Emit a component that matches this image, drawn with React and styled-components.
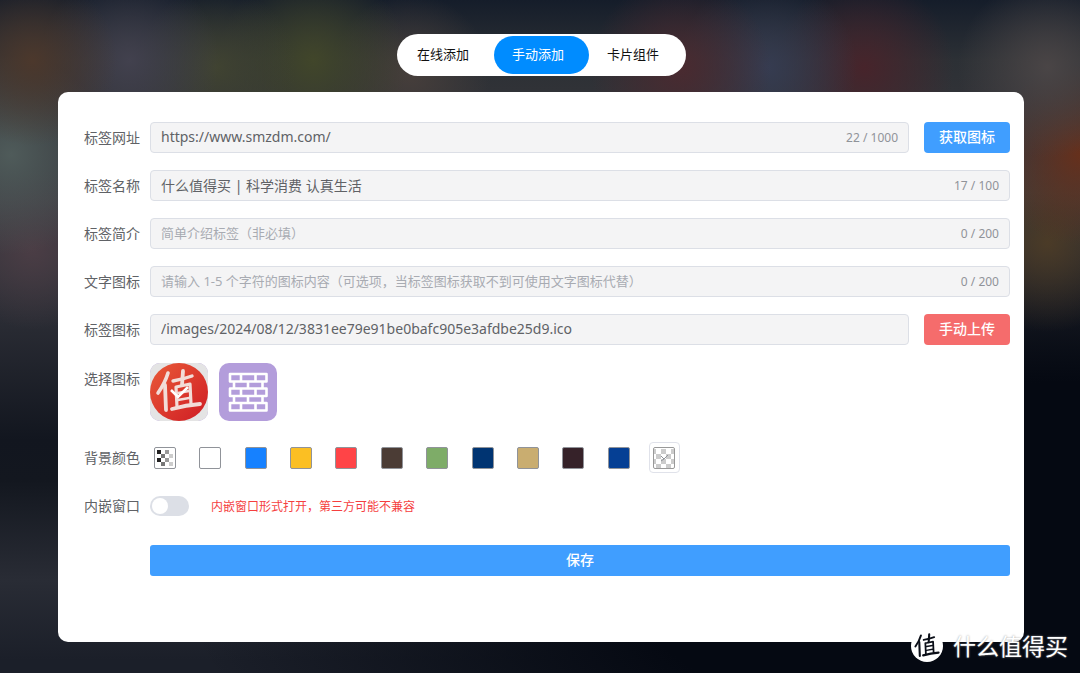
import React, { useState } from "react";
import styled, { createGlobalStyle } from "styled-components";

const colors = [
  "#ffffff",
  "#1681ff",
  "#fbbf23",
  "#ff4447",
  "#4b3c35",
  "#7eac68",
  "#003472",
  "#c9ad70",
  "#362229",
  "#053f94",
];

const Glyph = ({ stroke }) => (
  <g fill="none" stroke={stroke} strokeLinecap="round" strokeLinejoin="round">
    <path d="M18 10 Q15 20 8 30" strokeWidth="3.6" />
    <path d="M15 22 L16 47" strokeWidth="3.8" />
    <path d="M23 18 Q34 16 42 13" strokeWidth="3.4" />
    <path d="M33 8 L32 22" strokeWidth="3.8" />
    <path d="M26 24 L40 21 L41 41 M26 24 L27 44" strokeWidth="3.2" />
    <path d="M28 30 L39 28 M28 37 L39 35" strokeWidth="2.6" />
    <path d="M22 46 Q36 42 50 41" strokeWidth="3.8" />
  </g>
);

const SiteIcon = () => (
  <svg width="58" height="58" viewBox="0 0 58 58" aria-hidden="true">
    <defs>
      <linearGradient id="site" x1="0" y1="0" x2="1" y2="1">
        <stop offset="0" stopColor="#e95a38" />
        <stop offset="1" stopColor="#cf1c24" />
      </linearGradient>
    </defs>
    <rect width="58" height="58" fill="#e4e4e4" />
    <circle cx="29" cy="29" r="29" fill="url(#site)" />
    <Glyph stroke="#f2dcd8" />
    <path d="M21 27 L28 34 L38 24" fill="none" stroke="#fff" strokeWidth="2.6" />
  </svg>
);

const WallIcon = () => (
  <svg width="58" height="58" viewBox="0 0 58 58" aria-hidden="true">
    <g fill="none" stroke="#fff" strokeWidth="2.6" strokeLinejoin="round">
      <path d="M11 11H47.5V18.5H11Z M22 11V18.5 M36.5 11V18.5" />
      <path d="M15 18.5V25.5 M29 18.5V25.5 M43.5 18.5V25.5" />
      <path d="M11 25.5H47.5V33H11Z M22 25.5V33 M36.5 25.5V33" />
      <path d="M15 33V40 M29 33V40 M43.5 33V40" />
      <path d="M11 40H47.5V47.5H11Z M22 40V47.5 M36.5 40V47.5" />
    </g>
  </svg>
);

const ClearIcon = () => (
  <svg width="20" height="20" viewBox="0 0 20 20" aria-hidden="true">
    <path d="M2 2h4v4h-4z M2 10h4v4h-4z" fill="#222" />
    <path d="M6 6h4v4h-4z M6 14h4v4h-4z" fill="#777" />
    <path d="M10 2h4v4h-4z M10 10h4v4h-4z" fill="#999" />
    <path d="M14 6h4v4h-4z M14 14h4v4h-4z" fill="#ccc" />
  </svg>
);

const PickerIcon = () => (
  <svg width="20" height="20" viewBox="0 0 20 20" aria-hidden="true">
    <path
      d="M0 1h2v5h-2z M7 1h5v5h-5z M17 1h3v5h-3z M2 6h5v5h-5z M12 6h5v5h-5z M0 11h2v5h-2z M7 11h5v5h-5z M17 11h3v5h-3z M2 16h5v4h-5z M12 16h5v4h-5z"
      fill="#ccc"
    />
    <path d="M7 8 L10 11 L14 7 M7 13 L10 11" stroke="#909399" fill="none" />
  </svg>
);

const Field = ({ id, label, value, placeholder, count, action, danger }) => {
  const [text, setText] = useState(value || "");
  return (
    <Row>
      <Label htmlFor={id}>{label}</Label>
      <Box>
        <Input
          id={id}
          value={text}
          placeholder={placeholder}
          onChange={(e) => setText(e.target.value)}
        />
        {count && <Count>{count}</Count>}
      </Box>
      {action && (
        <Button type="button" $danger={danger}>
          {action}
        </Button>
      )}
    </Row>
  );
};

const App = () => {
  return (
    <Page>
      <GlobalStyle />
      <Tabs>
        <Tab type="button">在线添加</Tab>
        <Tab type="button" $active>
          手动添加
        </Tab>
        <Tab type="button">卡片组件</Tab>
      </Tabs>
      <Card>
        <Field
          id="url"
          label="标签网址"
          value="https://www.smzdm.com/"
          count="22 / 1000"
          action="获取图标"
        />
        <Field
          id="name"
          label="标签名称"
          value="什么值得买 | 科学消费 认真生活"
          count="17 / 100"
        />
        <Field
          id="intro"
          label="标签简介"
          placeholder="简单介绍标签（非必填）"
          count="0 / 200"
        />
        <Field
          id="text"
          label="文字图标"
          placeholder="请输入 1-5 个字符的图标内容（可选项，当标签图标获取不到可使用文字图标代替）"
          count="0 / 200"
        />
        <Field
          id="icon"
          label="标签图标"
          value="/images/2024/08/12/3831ee79e91be0bafc905e3afdbe25d9.ico"
          action="手动上传"
          danger
        />
        <IconRow>
          <Label as="span">选择图标</Label>
          <Icons>
            <IconButton type="button" aria-label="值">
              <SiteIcon />
            </IconButton>
            <IconButton type="button" aria-label="墙">
              <WallIcon />
            </IconButton>
          </Icons>
        </IconRow>
        <Row>
          <Label as="span">背景颜色</Label>
          <Swatches>
            <Swatch type="button" aria-label="透明">
              <ClearIcon />
            </Swatch>
            {colors.map((color) => (
              <Swatch type="button" key={color} $color={color} aria-label={color} />
            ))}
            <Picker type="button" aria-label="自定义">
              <PickerFrame>
                <PickerIcon />
              </PickerFrame>
            </Picker>
          </Swatches>
        </Row>
        <Row>
          <Label htmlFor="embed">内嵌窗口</Label>
          <Switch id="embed" type="checkbox" />
          <Hint>内嵌窗口形式打开，第三方可能不兼容</Hint>
        </Row>
        <Save type="submit">保存</Save>
      </Card>
      <Brand>
        <svg width="32" height="32" viewBox="0 0 58 58" aria-hidden="true">
          <circle cx="29" cy="29" r="29" fill="#fff" />
          <Glyph stroke="#0b0f18" />
        </svg>
        什么值得买
      </Brand>
    </Page>
  );
};
export default App;

const GlobalStyle = createGlobalStyle`
  * {
    box-sizing: border-box;
  }
  body {
    margin: 0;
    background: #060a13;
  }
  body, button, input {
    font-family: "Noto Sans", "Noto Sans CJK SC", sans-serif;
    font-size: 14px;
  }
  button {
    cursor: pointer;
  }
`;
const Page = styled.div`
  position: relative;
  min-height: 100vh;
  padding: 34px 56px 31px 58px;
  display: flex;
  flex-direction: column;
  align-items: center;
  background:
    radial-gradient(circle at 3% 9%, #4c382c 0, transparent 85px),
    radial-gradient(circle at 12% 9%, #42414e 0, transparent 90px),
    radial-gradient(circle at 20% 10%, #404331 0, transparent 80px),
    radial-gradient(circle at 29% 9%, #41462a 0, transparent 95px),
    radial-gradient(circle at 38% 11%, #463e3b 0, transparent 80px),
    radial-gradient(circle at 63% 10%, #4a2a30 0, transparent 90px),
    radial-gradient(circle at 71% 10%, #363c51 0, transparent 90px),
    radial-gradient(circle at 80% 10%, #47242b 0, transparent 90px),
    radial-gradient(circle at 97% 10%, #4a4546 0, transparent 90px),
    radial-gradient(circle at 100% 23%, #66301c 0, transparent 90px),
    radial-gradient(circle at 97% 36%, #4b3b27 0, transparent 90px),
    radial-gradient(circle at 1% 23%, #4f5b5a 0, transparent 100px),
    radial-gradient(circle at 3% 37%, #4b3d45 0, transparent 80px),
    radial-gradient(ellipse 900px 380px at 100% 85%, #050912 50%, transparent 100%),
    linear-gradient(180deg, #151d2a 0, #2c3035 60px, #303237 90px, #3b3c42 200px, #2a2c34 320px, #12161f 440px, #13171f 480px, #292c35 580px, #1b1f29 660px);
`;
const Tabs = styled.nav`
  height: 42px;
  padding: 2px;
  display: flex;
  border-radius: 21px;
  background: #fff;
`;
const Tab = styled.button`
  width: 95px;
  padding: 0 6px 3px 0;
  border: 0;
  border-radius: 19px;
  font-size: 13px;
  color: ${(p) => (p.$active ? "#fff" : "#111")};
  background: ${(p) => (p.$active ? "#008cff" : "transparent")};
`;
const Card = styled.form`
  width: 100%;
  margin-top: 16px;
  padding: 30px 14px 66px 26px;
  flex: 1;
  display: flex;
  flex-direction: column;
  gap: 17px;
  border-radius: 10px;
  background: #fff;
`;
const Row = styled.div`
  min-height: 31px;
  display: flex;
  align-items: center;
`;
const IconRow = styled(Row)`
  align-items: flex-start;
  padding: 1px 0 4px;
`;
const Label = styled.label`
  flex: none;
  width: 66px;
  line-height: 31px;
  color: #606266;
`;
const Box = styled.div`
  flex: 1;
  height: 31px;
  padding: 0 10px;
  display: flex;
  align-items: center;
  border: 1px solid #dcdfe6;
  border-radius: 4px;
  background: #f4f4f5;
`;
const Input = styled.input`
  flex: 1;
  min-width: 0;
  height: 29px;
  padding: 0 0 2px;
  border: 0;
  outline: 0;
  background: transparent;
  color: #606266;
  &::placeholder {
    font-size: 13px;
    color: #a8abb2;
  }
`;
const Count = styled.span`
  font-size: 12px;
  color: #909399;
`;
const Button = styled.button`
  width: 86px;
  height: 31px;
  margin-left: 15px;
  padding: 0 0 3px;
  border: 0;
  border-radius: 4px;
  font-weight: 500;
  color: #fff;
  background: ${(p) => (p.$danger ? "#f56c6c" : "#409eff")};
`;
const Icons = styled.div`
  display: flex;
  gap: 11px;
`;
const IconButton = styled.button`
  width: 58px;
  height: 58px;
  padding: 0;
  display: flex;
  overflow: hidden;
  border: 0;
  border-radius: 10px;
  background: #b39ddb;
`;
const Swatches = styled.div`
  width: 530px;
  display: flex;
  align-items: center;
  justify-content: space-between;
  padding-left: 4px;
`;
const Swatch = styled.button`
  width: 22px;
  height: 22px;
  padding: 0;
  display: flex;
  border: 1px solid #909399;
  border-radius: 2px;
  background: ${(p) => p.$color || "#fff"};
`;
const Picker = styled.button`
  width: 31px;
  height: 31px;
  margin-left: -4px;
  padding: 0;
  display: flex;
  align-items: center;
  justify-content: center;
  border: 1px solid #e0e2ea;
  border-radius: 4px;
  background: #fff;
`;
const PickerFrame = styled.span`
  width: 22px;
  height: 22px;
  display: flex;
  border: 1px solid #999;
  border-radius: 2px;
`;
const Switch = styled.input`
  appearance: none;
  width: 39px;
  height: 20px;
  margin: 0;
  padding: 2px;
  display: flex;
  border-radius: 10px;
  background: #dcdfe6;
  &::before {
    content: "";
    width: 16px;
    height: 16px;
    border-radius: 50%;
    background: #fff;
  }
  &:checked {
    justify-content: flex-end;
    background: #409eff;
  }
`;
const Hint = styled.span`
  margin-left: 22px;
  font-size: 12px;
  color: #f53f3f;
`;
const Save = styled.button`
  height: 31px;
  margin: 7px 0 0 66px;
  padding: 0 0 3px;
  border: 0;
  border-radius: 3px;
  font-weight: 500;
  color: #fff;
  background: #409eff;
`;
const Brand = styled.div`
  position: absolute;
  right: 12px;
  bottom: 11px;
  display: flex;
  align-items: center;
  gap: 10px;
  font-size: 23px;
  line-height: 32px;
  color: #fff;
  text-shadow: 0 0 2px #999;
`;
